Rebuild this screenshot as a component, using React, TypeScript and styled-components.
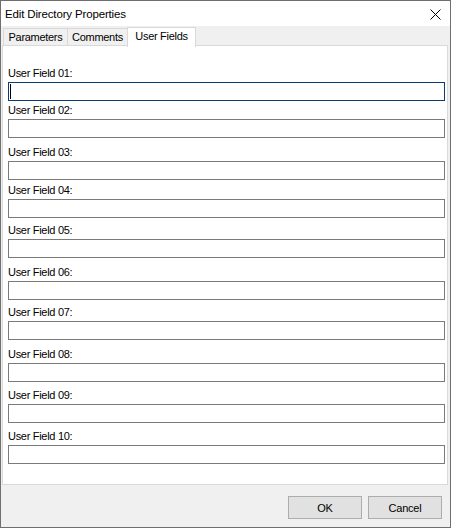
import React from "react";
import styled, { createGlobalStyle } from "styled-components";

const Global = createGlobalStyle`
  html, body { margin: 0; padding: 0; background: #ffffff; }
  * { box-sizing: border-box; }
`;

const Window = styled.div`
  width: 451px;
  height: 528px;
  border: 1px solid #6f6f6f;
  background: #f0f0f0;
  display: flex;
  flex-direction: column;
  font-family: "Liberation Sans", Arial, sans-serif;
  font-size: 11px;
  color: #000;
`;

const TitleBar = styled.div`
  height: 25px;
  background: #ffffff;
  display: flex;
  align-items: center;
  justify-content: space-between;
  padding: 1px 9px 0 4px;
`;

const Title = styled.span`
  font-size: 11.5px;
  letter-spacing: -0.15px;
`;

const CloseIcon = styled.svg`
  width: 11px;
  height: 11px;
  display: block;
`;

const TabStrip = styled.div`
  height: 20px;
  display: flex;
  align-items: flex-end;
  padding-left: 2px;
`;

const Tab = styled.div<{ $active?: boolean; $w: number }>`
  position: relative;
  z-index: ${(p) => (p.$active ? 2 : 1)};
  width: ${(p) => p.$w}px;
  height: ${(p) => (p.$active ? 20 : 18)}px;
  margin-left: -1px;
  margin-bottom: ${(p) => (p.$active ? -1 : 0)}px;
  &:first-child { margin-left: 0; }
  background: ${(p) => (p.$active ? "#ffffff" : "#f0f0f0")};
  border: 1px solid #d9d9d9;
  border-bottom: ${(p) => (p.$active ? "none" : "1px solid #d9d9d9")};
  display: flex;
  align-items: center;
  justify-content: center;
  padding-bottom: ${(p) => (p.$active ? 3 : 0)}px;
  letter-spacing: -0.3px;
  white-space: nowrap;
`;

const Panel = styled.div`
  position: relative;
  margin: -1px 2px 0 1px;
  height: 440px;
  background: #ffffff;
  border: 1px solid #d9d9d9;
  padding: 21px 0 0 5px;
  display: flex;
  flex-direction: column;
`;

const FieldRow = styled.div<{ $gap: number }>`
  display: flex;
  flex-direction: column;
  margin-top: ${(p) => p.$gap}px;
`;

const Label = styled.div`
  height: 13px;
  line-height: 13px;
  margin-bottom: 2px;
  letter-spacing: -0.3px;
  white-space: nowrap;
`;

const Field = styled.div<{ $focused?: boolean }>`
  position: relative;
  width: 437px;
  height: 19px;
  background: #ffffff;
  border: 1px solid ${(p) => (p.$focused ? "#0b3b70" : "#7a7a7a")};
`;

const Caret = styled.span`
  position: absolute;
  left: 1px;
  top: 1px;
  width: 1px;
  height: 15px;
  background: #000;
`;

const Footer = styled.div`
  flex: 1;
  display: flex;
  justify-content: flex-end;
  align-items: flex-start;
  gap: 6px;
  padding: 11px 8px 0 0;
`;

const Button = styled.button`
  width: 74px;
  height: 23px;
  background: #e1e1e1;
  border: 1px solid #adadad;
  font-family: "Liberation Sans", Arial, sans-serif;
  font-size: 11px;
  letter-spacing: -0.2px;
  color: #000;
  padding: 0;
`;

const gaps = [0, 3, 8, 4, 6, 8, 6, 8, 7, 7];

export default function App() {
  return (
    <>
      <Global />
      <Window>
        <TitleBar>
          <Title>Edit Directory Properties</Title>
          <CloseIcon viewBox="0 0 11 11">
            <path d="M0.5 0.5 L10.5 10.5 M10.5 0.5 L0.5 10.5" stroke="#000" strokeWidth="1" />
          </CloseIcon>
        </TitleBar>
        <TabStrip>
          <Tab $w={65}>Parameters</Tab>
          <Tab $w={61}>Comments</Tab>
          <Tab $w={69} $active>User Fields</Tab>
        </TabStrip>
        <Panel>
          {gaps.map((g, i) => {
            const n = String(i + 1).padStart(2, "0");
            return (
              <FieldRow key={n} $gap={g}>
                <Label>User Field {n}:</Label>
                <Field $focused={i === 0}>{i === 0 && <Caret />}</Field>
              </FieldRow>
            );
          })}
        </Panel>
        <Footer>
          <Button>OK</Button>
          <Button>Cancel</Button>
        </Footer>
      </Window>
    </>
  );
}
